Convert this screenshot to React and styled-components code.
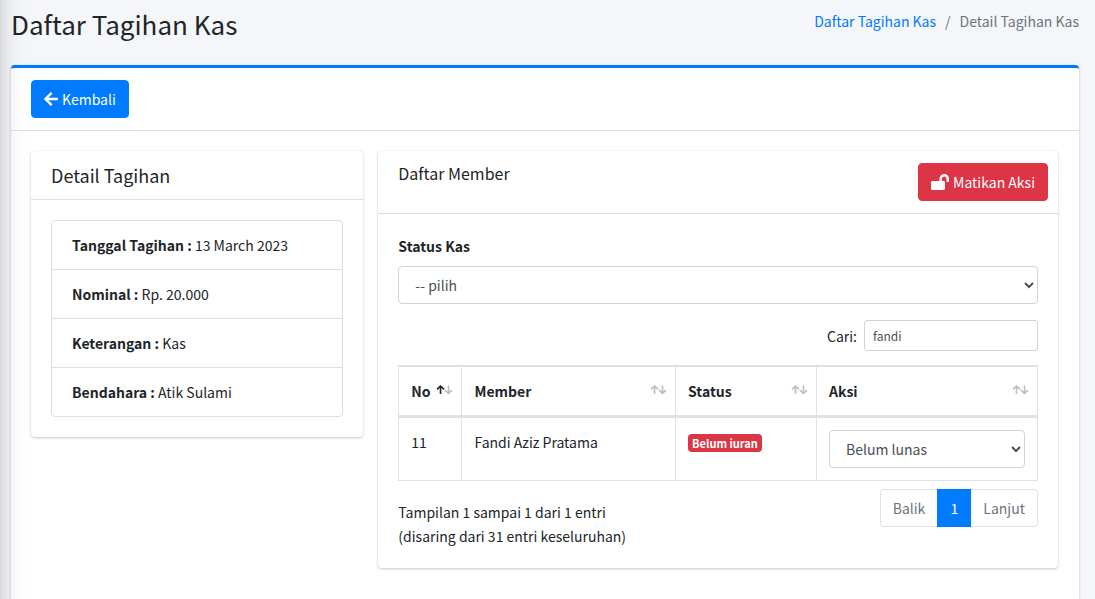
import React from "react";
import styled, { createGlobalStyle } from "styled-components";
import { FaArrowLeft, FaLockOpen } from "react-icons/fa";

const GlobalStyle = createGlobalStyle`
  *, *::before, *::after { box-sizing: border-box; }
  body {
    margin: 0;
    background: #f4f6f9;
    color: #212529;
    font-family: "Source Sans Pro", "Noto Sans CJK SC", sans-serif;
    font-size: 14px;
    line-height: 24px;
  }
  button, input, select { font-family: inherit; }
`;

const Page = styled.div`
  position: relative;
  min-height: 100vh;
  padding: 0 16px 0 11px;
  overflow: hidden;
  display: flex;
  flex-direction: column;

  /* shadow cast by the off-canvas sidebar */
  &::before {
    content: "";
    position: absolute;
    z-index: 2;
    top: -60px;
    bottom: -60px;
    left: -255px;
    width: 250px;
    pointer-events: none;
    box-shadow: 0 14px 28px rgba(0, 0, 0, 0.25), 0 10px 10px rgba(0, 0, 0, 0.22);
  }
`;

const PageHeader = styled.header`
  display: flex;
  justify-content: space-between;
  align-items: flex-start;
  padding: 7px 0 24px;
`;

const PageTitle = styled.h1`
  margin: 0;
  font-size: 26px;
  font-weight: 400;
  line-height: 34px;
`;

const Breadcrumb = styled.ol`
  display: flex;
  gap: 9px;
  margin: 0;
  padding: 2px 0 0;
  list-style: none;
  color: #6c757d;

  a {
    color: #007bff;
    text-decoration: none;
  }
  li + li::before {
    content: "/";
    padding-right: 9px;
  }
`;

const Card = styled.section`
  background: #fff;
  border-radius: 4px;
  box-shadow: 0 0 1px rgba(0, 0, 0, 0.125), 0 1px 3px rgba(0, 0, 0, 0.2);
`;

const MainCard = styled(Card)`
  flex: 1;
  border-top: 3px solid #007bff;
  border-radius: 4px 4px 0 0;
`;

const CardHeader = styled.div`
  display: flex;
  justify-content: space-between;
  align-items: flex-start;
  padding: 12px ${(p) => (p.$tight ? "10px" : "20px")} 12px 20px;
  border-bottom: 1px solid #dfdfdf;
`;

const CardBody = styled.div`
  padding: 20px;
`;

const CardTitle = styled.h3`
  margin: 0;
  font-size: ${(p) => (p.$small ? "16px" : "18px")};
  font-weight: 400;
  line-height: ${(p) => (p.$small ? "20px" : "24px")};
`;

const Columns = styled.div`
  display: grid;
  grid-template-columns: repeat(12, minmax(0, 1fr));
  column-gap: 15px;
  align-items: start;
  padding: 20px 21px 20px 20px;
`;

const Column = styled.div`
  grid-column: span ${(p) => p.$span};
`;

const Button = styled.button`
  display: inline-flex;
  align-items: center;
  gap: 4px;
  height: 38px;
  padding: 0 12px;
  border: 1px solid ${(p) => p.$color};
  border-radius: 4px;
  background: ${(p) => p.$color};
  color: #fff;
  font-size: 14px;
  line-height: 24px;

  svg {
    flex: none;
    width: ${(p) => p.$iconWidth};
    height: 16px;
  }
`;

const DetailList = styled.ul`
  margin: 0;
  padding: 0;
  list-style: none;
  border: 1px solid #dfdfdf;
  border-radius: 4px;
`;

const DetailItem = styled.li`
  padding: 12px 20px;

  & + & {
    border-top: 1px solid #dfdfdf;
  }
`;

const FieldLabel = styled.label`
  display: block;
  margin-bottom: 8px;
  font-weight: 700;
`;

const Select = styled.select`
  display: block;
  width: 100%;
  height: 38px;
  padding: 6px 12px;
  border: 1px solid #ced4da;
  border-radius: 4px;
  background: #fff;
  color: #495057;
  font-size: 14px;
  line-height: 24px;
`;

const SearchRow = styled.div`
  display: flex;
  justify-content: flex-end;
  align-items: center;
  gap: 7px;
  margin: 16px 0 14px;
`;

const SearchInput = styled.input`
  width: 174px;
  height: 31px;
  padding: 4px 8px;
  border: 1px solid #ced4da;
  border-radius: 3px;
  color: #495057;
  font-size: 12px;
  line-height: 21px;
`;

const Table = styled.table`
  width: 100%;
  table-layout: fixed;
  border: 1px solid #dee2e6;
  border-collapse: separate;
  border-spacing: 0;

  th, td {
    padding: 12px;
    border-top: 1px solid #dee2e6;
    border-right: 1px solid #dee2e6;
    text-align: left;
    vertical-align: top;
  }
  th {
    padding-right: 8px;
    border-bottom: 2px solid #dee2e6;
  }
  th:last-child, td:last-child { border-right: 0; }
`;

const Col = styled.col`
  width: ${(p) => p.$width};
`;

const HeadCell = styled.div`
  display: flex;
  justify-content: space-between;
  align-items: center;
  height: 24px;
`;

const Arrows = styled.svg`
  flex: none;
  width: 17px;
  height: 12px;
  margin-bottom: 2px;
  fill: none;
  stroke: #212529;
  stroke-width: 1.6;
`;

const Badge = styled.span`
  display: inline-block;
  padding: 0 4px;
  border-radius: 4px;
  background: #dc3545;
  color: #fff;
  font-size: 11px;
  font-weight: 700;
  line-height: 18px;
`;

const TableFooter = styled.div`
  display: flex;
  justify-content: space-between;
  align-items: flex-start;
  padding-top: 8px;
`;

const Info = styled.p`
  margin: 0;
  padding-top: 11px;
`;

const Pagination = styled.ul`
  display: flex;
  margin: 0;
  padding: 0;
  list-style: none;
`;

const PageLink = styled.a`
  display: block;
  min-width: 34px;
  padding: 6px 12px;
  text-align: center;
  border: 1px solid ${(p) => (p.$active ? "#007bff" : "#dee2e6")};
  border-left-width: ${(p) => (p.$side === "right" ? 0 : "1px")};
  border-right-width: ${(p) => (p.$side === "left" ? 0 : "1px")};
  border-radius: ${(p) =>
    p.$side === "left" ? "4px 0 0 4px" : p.$side === "right" ? "0 4px 4px 0" : "0"};
  background: ${(p) => (p.$active ? "#007bff" : "#fff")};
  color: ${(p) => (p.$active ? "#fff" : "#6c757d")};
  text-decoration: none;
`;

const details = [
  ["Tanggal Tagihan", "13 March 2023"],
  ["Nominal", "Rp. 20.000"],
  ["Keterangan", "Kas"],
  ["Bendahara", "Atik Sulami"],
];

const columns = [
  { name: "No", width: "9.9%", sorted: true },
  { name: "Member", width: "33.5%" },
  { name: "Status", width: "22.1%" },
  { name: "Aksi", width: "34.5%" },
];

function SortArrows({ sorted }) {
  return (
    <Arrows viewBox="0 0 17 12" aria-hidden="true">
      <path d="M4.5 10V2.2M1 5.4L4.5 2L8 5.4" opacity={sorted ? 1 : 0.3} />
      <path d="M12.5 1.5V9.3M9 6.1L12.5 9.5L16 6.1" opacity="0.3" />
    </Arrows>
  );
}

export default function App() {
  return (
    <>
      <GlobalStyle />
      <Page>
        <PageHeader>
          <PageTitle>Daftar Tagihan Kas</PageTitle>
          <nav aria-label="Breadcrumb">
            <Breadcrumb>
              <li><a href="#tagihan">Daftar Tagihan Kas</a></li>
              <li>Detail Tagihan Kas</li>
            </Breadcrumb>
          </nav>
        </PageHeader>
        <MainCard as="main">
          <CardHeader>
            <Button type="button" $color="#007bff" $iconWidth="14px"><FaArrowLeft />Kembali</Button>
          </CardHeader>
          <Columns>
            <Column $span={4}>
              <Card>
                <CardHeader><CardTitle>Detail Tagihan</CardTitle></CardHeader>
                <CardBody>
                  <DetailList>
                    {details.map(([label, value]) => (
                      <DetailItem key={label}><b>{label} :</b> {value}</DetailItem>
                    ))}
                  </DetailList>
                </CardBody>
              </Card>
            </Column>
            <Column $span={8}>
              <Card>
                <CardHeader $tight>
                  <CardTitle $small>Daftar Member</CardTitle>
                  <Button type="button" $color="#dc3545" $iconWidth="18px"><FaLockOpen />Matikan Aksi</Button>
                </CardHeader>
                <CardBody>
                  <FieldLabel htmlFor="status">Status Kas</FieldLabel>
                  <Select id="status" defaultValue="">
                    <option value="">-- pilih</option>
                  </Select>
                  <SearchRow>
                    <label htmlFor="search">Cari:</label>
                    <SearchInput id="search" defaultValue="fandi" />
                  </SearchRow>
                  <Table>
                    <colgroup>
                      {columns.map((c) => <Col key={c.name} $width={c.width} />)}
                    </colgroup>
                    <thead>
                      <tr>
                        {columns.map((c) => (
                          <th key={c.name} scope="col">
                            <HeadCell>{c.name}<SortArrows sorted={c.sorted} /></HeadCell>
                          </th>
                        ))}
                      </tr>
                    </thead>
                    <tbody>
                      <tr>
                        <td>11</td>
                        <td>Fandi Aziz Pratama</td>
                        <td><Badge>Belum iuran</Badge></td>
                        <td>
                          <Select aria-label="Aksi" defaultValue="belum">
                            <option value="belum">Belum lunas</option>
                          </Select>
                        </td>
                      </tr>
                    </tbody>
                  </Table>
                  <TableFooter>
                    <Info>
                      Tampilan 1 sampai 1 dari 1 entri<br />
                      (disaring dari 31 entri keseluruhan)
                    </Info>
                    <Pagination>
                      <li><PageLink href="#prev" $side="left">Balik</PageLink></li>
                      <li><PageLink href="#1" $active>1</PageLink></li>
                      <li><PageLink href="#next" $side="right">Lanjut</PageLink></li>
                    </Pagination>
                  </TableFooter>
                </CardBody>
              </Card>
            </Column>
          </Columns>
        </MainCard>
      </Page>
    </>
  );
}
